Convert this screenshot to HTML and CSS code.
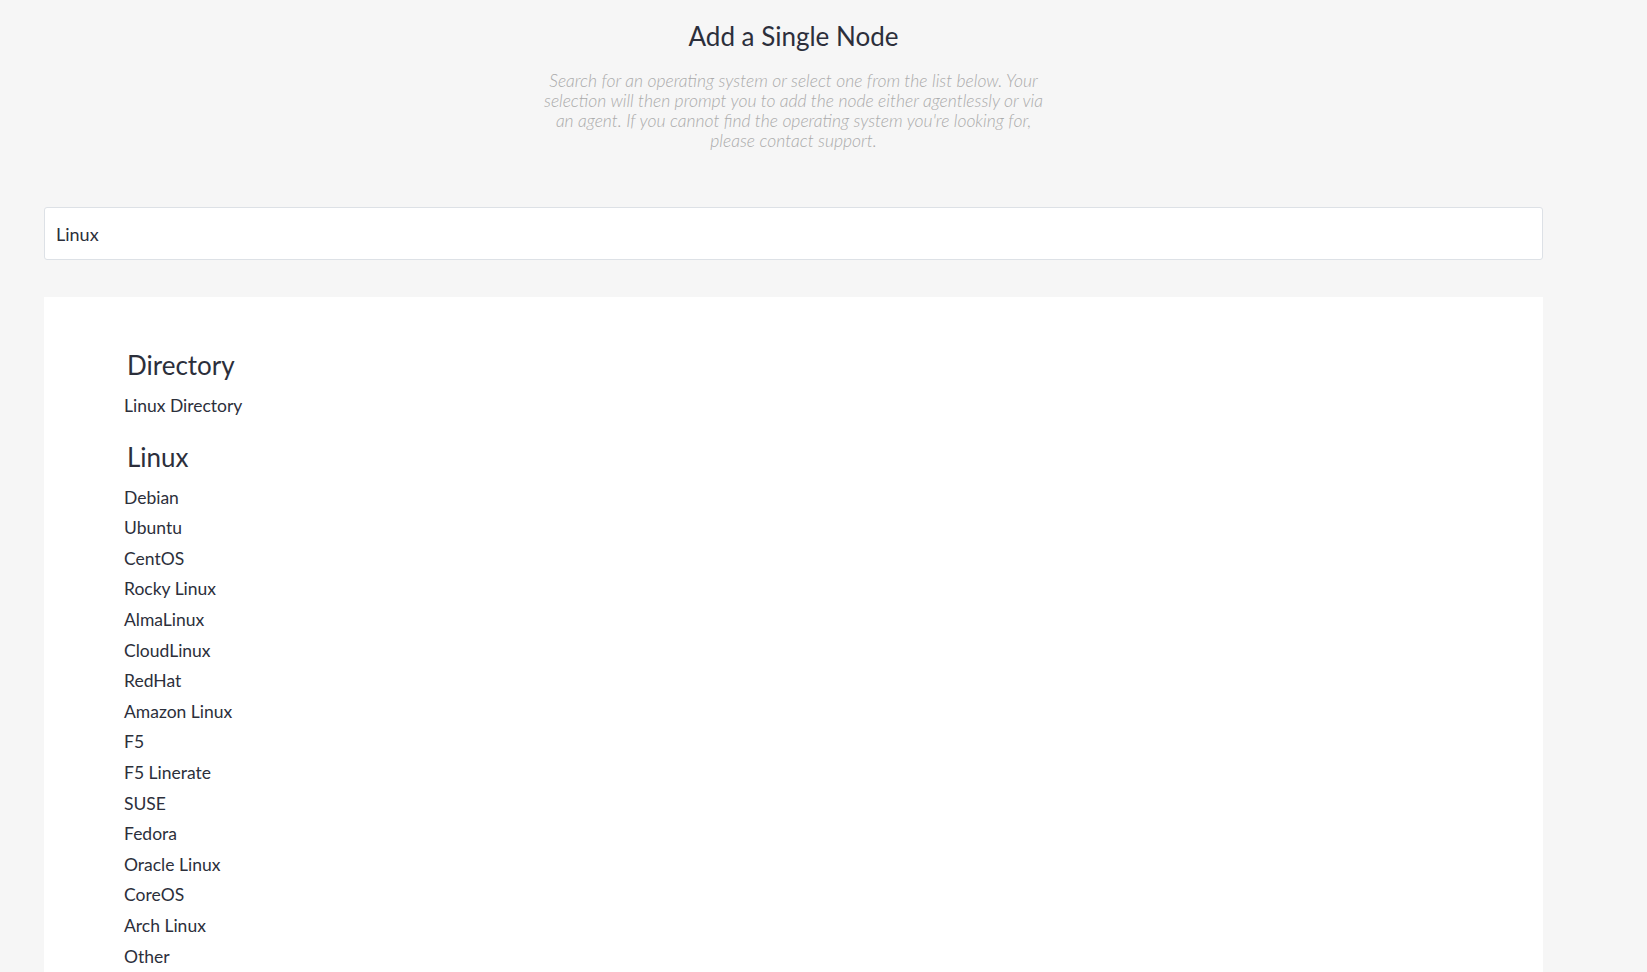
FILE: index.html
```html
<!DOCTYPE html>
<html lang="en">
<head>
    <meta charset="UTF-8">
    <meta name="viewport" content="width=device-width, initial-scale=1.0">
    <title>Add a Single Node</title>
    <link rel="stylesheet" href="styles.css">
</head>
<body>
    <div class="page">
        <div class="intro">
            <h1 class="title">Add a Single Node</h1>
            <p class="lead">Search for an operating system or select one from the list below. Your selection will then prompt you to add the node either agentlessly or via an agent. If you cannot find the operating system you're looking for, please contact support.</p>
        </div>

        <input type="text" class="search" id="search" value="Linux">

        <div class="results" id="results">
            <div class="group">
                <h2 class="group-title">Directory</h2>
                <a class="item" href="#">Linux Directory</a>
            </div>
            <div class="group">
                <h2 class="group-title">Linux</h2>
                <a class="item" href="#">Debian</a>
                <a class="item" href="#">Ubuntu</a>
                <a class="item" href="#">CentOS</a>
                <a class="item" href="#">Rocky Linux</a>
                <a class="item" href="#">AlmaLinux</a>
                <a class="item" href="#">CloudLinux</a>
                <a class="item" href="#">RedHat</a>
                <a class="item" href="#">Amazon Linux</a>
                <a class="item" href="#">F5</a>
                <a class="item" href="#">F5 Linerate</a>
                <a class="item" href="#">SUSE</a>
                <a class="item" href="#">Fedora</a>
                <a class="item" href="#">Oracle Linux</a>
                <a class="item" href="#">CoreOS</a>
                <a class="item" href="#">Arch Linux</a>
                <a class="item" href="#">Other</a>
            </div>
        </div>
    </div>
</body>
</html>
```

FILE: styles.css
```css
body {
    font-family: Lato, "Open Sans", sans-serif;
    margin: 0;
    background-color: #f6f6f6;
    color: #2c2f3b;
}

.page {
    padding: 0 104px 0 44px;
}

.intro {
    text-align: center;
    padding-top: 20px;
}

.title {
    font-size: 26px;
    font-weight: 400;
    margin: 0;
    line-height: 32px;
}

.lead {
    max-width: 512px;
    margin: 19px auto 0;
    font-size: 17.5px;
    line-height: 20px;
    font-style: italic;
    font-weight: 300;
    color: #ababab;
}

.search {
    display: block;
    box-sizing: border-box;
    width: 100%;
    height: 53px;
    margin-top: 56px;
    padding: 0 11px;
    font-family: inherit;
    font-size: 18px;
    color: #2c2f3b;
    background: #fff;
    border: 1px solid #dde1e6;
    border-radius: 3px;
    outline: none;
}

.results {
    margin-top: 37px;
    background: #fff;
    padding: 50px 83px 20px;
    min-height: 700px;
}

.group {
    display: flex;
    flex-direction: column;
    align-items: flex-start;
    margin-bottom: 17px;
}

.group-title {
    font-size: 26px;
    font-weight: 400;
    margin: 0 0 8px;
    line-height: 36px;
}

.item {
    font-size: 17.5px;
    line-height: 30.6px;
    color: #2c2f3b;
    text-decoration: none;
    margin-left: -3px;
}

.item:hover {
    color: #0a64c8;
}
```
